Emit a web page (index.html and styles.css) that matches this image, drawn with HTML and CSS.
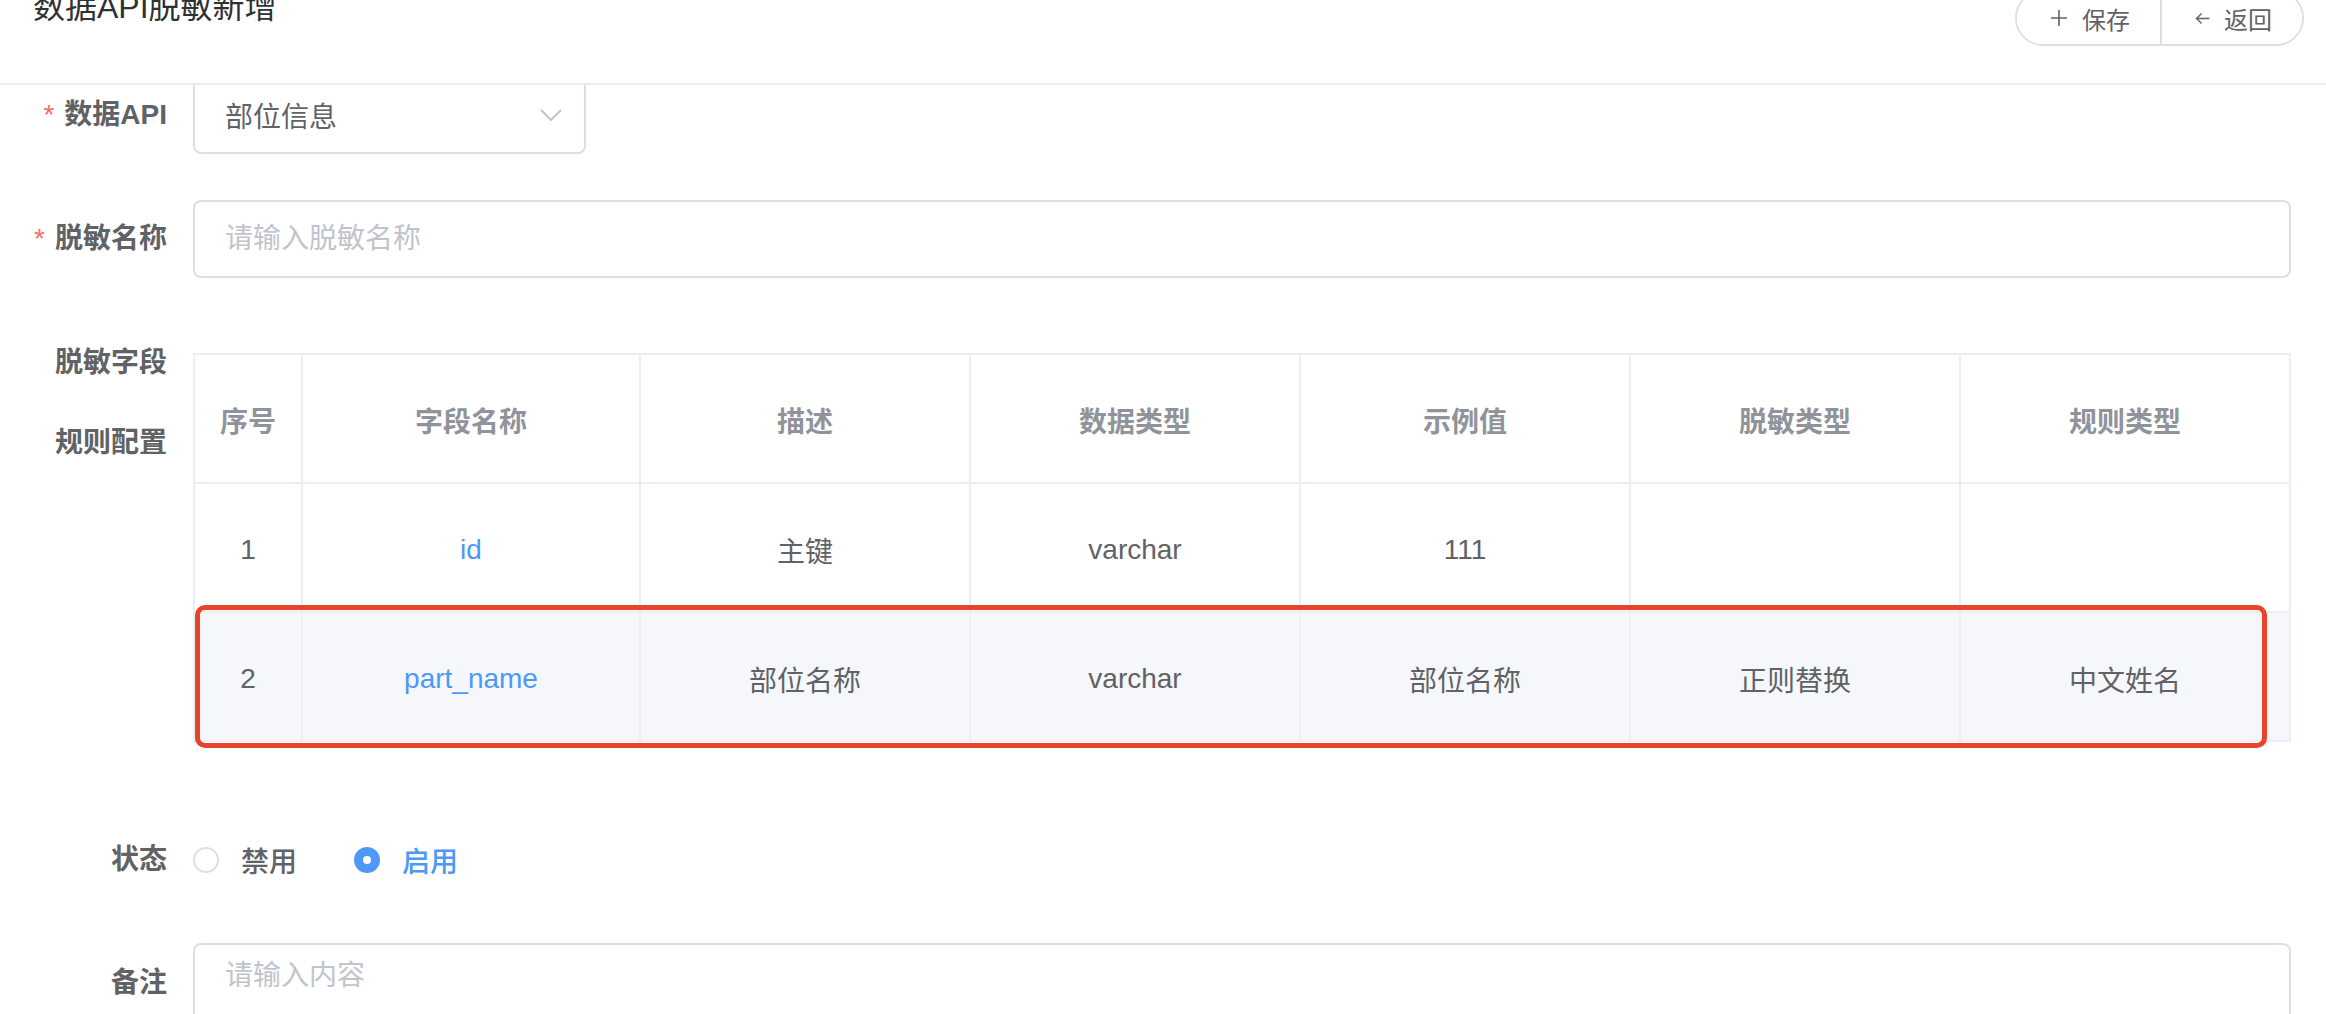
FILE: index.html
```html
<!DOCTYPE html>
<html lang="zh-CN">
<head>
<meta charset="utf-8">
<title>数据API脱敏新增</title>
<link rel="stylesheet" href="styles.css">
</head>
<body>
<header class="page-header">
  <h1 class="page-title">数据API脱敏新增</h1>
  <div class="btn-group">
    <button class="btn btn-save"><svg class="btn-icon" viewBox="0 0 18 18"><path d="M9 1v16M1 9h16"/></svg><span>保存</span></button>
    <button class="btn btn-back"><svg class="btn-icon arrow" viewBox="0 0 16 14"><path d="M15.5 7H1.5M7 1.5L1.5 7 7 12.5"/></svg><span>返回</span></button>
  </div>
</header>
<main class="form">
  <div class="form-item item-api">
    <label class="form-label"><span class="req">*</span>数据API</label>
    <div class="select">
      <span class="select-value">部位信息</span>
      <svg class="chevron" viewBox="0 0 22 12"><path d="M1 1l10 10L21 1"/></svg>
    </div>
  </div>
  <div class="form-item item-name">
    <label class="form-label"><span class="req">*</span>脱敏名称</label>
    <input class="input" type="text" placeholder="请输入脱敏名称">
  </div>
  <div class="form-item item-table">
    <label class="form-label multi">脱敏字段<br>规则配置</label>
    <div class="table">
      <div class="cell th">序号</div>
      <div class="cell th">字段名称</div>
      <div class="cell th">描述</div>
      <div class="cell th">数据类型</div>
      <div class="cell th">示例值</div>
      <div class="cell th">脱敏类型</div>
      <div class="cell th">规则类型</div>

      <div class="cell">1</div>
      <div class="cell link">id</div>
      <div class="cell">主键</div>
      <div class="cell">varchar</div>
      <div class="cell">111</div>
      <div class="cell"></div>
      <div class="cell"></div>

      <div class="cell hl">2</div>
      <div class="cell hl link">part_name</div>
      <div class="cell hl">部位名称</div>
      <div class="cell hl">varchar</div>
      <div class="cell hl">部位名称</div>
      <div class="cell hl">正则替换</div>
      <div class="cell hl">中文姓名</div>

      <div class="highlight-box"></div>
    </div>
  </div>
  <div class="form-item item-status">
    <label class="form-label">状态</label>
    <div class="radio-group">
      <span class="radio"><span class="radio-dot"></span><span class="radio-text">禁用</span></span>
      <span class="radio checked"><span class="radio-dot"></span><span class="radio-text">启用</span></span>
    </div>
  </div>
  <div class="form-item item-remark">
    <label class="form-label tall">备注</label>
    <textarea class="textarea" placeholder="请输入内容"></textarea>
  </div>
</main>
</body>
</html>
```
FILE: styles.css
```css
* { box-sizing: border-box; }
html, body { margin: 0; padding: 0; background: #fff; }
body {
  font-family: "Liberation Sans", "Noto Sans CJK SC", sans-serif;
  color: #606266;
  overflow: hidden;
}

/* header */
.page-header {
  position: relative;
  z-index: 2;
  background: #fff;
  height: 85px;
  border-bottom: 2px solid #ebebf0;
  display: flex;
  justify-content: space-between;
  align-items: flex-start;
  padding: 0 22px 0 33px;
}
.page-title {
  margin: -9px 0 0;
  font-size: 32px;
  line-height: 32px;
  font-weight: 400;
  color: #303133;
}
.btn-group {
  margin-top: -10px;
  display: flex;
  height: 56px;
  border: 2px solid #dcdfe6;
  border-radius: 28px;
  overflow: hidden;
  background: #fff;
}
.btn {
  display: flex;
  align-items: center;
  gap: 14px;
  border: 0;
  background: #fff;
  font-family: "Liberation Sans", "Noto Sans CJK SC", sans-serif;
  font-size: 24px;
  color: #606266;
  padding: 0;
}
.btn-save { padding: 0 30px 0 33px; }
.btn-back { padding: 0 30px 0 33px; border-left: 2px solid #dcdfe6; }
.btn-icon {
  width: 18px;
  height: 18px;
  fill: none;
  stroke: #606266;
  stroke-width: 1.6;
}
.btn-icon.arrow { width: 15px; height: 13px; stroke-width: 1.5; }

/* form */
.form {
  position: relative;
  z-index: 1;
  margin-top: -9px;
  padding-right: 35px;
}
.form-item {
  display: flex;
  align-items: flex-start;
}
.form-label {
  flex: 0 0 193px;
  padding-right: 26px;
  text-align: right;
  font-size: 28px;
  font-weight: 700;
  line-height: 78px;
  color: #606266;
}
.form-label.multi { line-height: 80px; margin-top: -30px; }
.form-label.tall { line-height: 80px; }
.req {
  color: #f56c6c;
  font-weight: 400;
  margin-right: 10px;
}

.item-api { margin-bottom: 46px; }
.item-name { margin-bottom: 75px; }
.item-table { margin-bottom: 79px; }
.item-status { margin-bottom: 44px; }

.select {
  width: 393px;
  height: 78px;
  border: 2px solid #dcdfe6;
  border-radius: 8px;
  display: flex;
  align-items: center;
  justify-content: space-between;
  padding: 0 22px 0 30px;
  font-size: 28px;
  color: #606266;
  background: #fff;
}
.chevron {
  width: 22px;
  height: 12px;
  fill: none;
  stroke: #c0c4cc;
  stroke-width: 2;
}

.input {
  flex: 1;
  height: 78px;
  border: 2px solid #dcdfe6;
  border-radius: 8px;
  padding: 0 30px;
  font-family: "Liberation Sans", "Noto Sans CJK SC", sans-serif;
  font-size: 28px;
  color: #606266;
  outline: none;
  background: #fff;
}
.input::placeholder, .textarea::placeholder { color: #c0c4cc; }

/* table */
.table {
  flex: 1;
  position: relative;
  border-top: 2px solid #ebeef5;
  border-left: 2px solid #ebeef5;
  display: grid;
  grid-template-columns: 108px 338px repeat(5, 1fr);
  grid-auto-rows: 129px;
}
.cell {
  border-right: 2px solid #ebeef5;
  border-bottom: 2px solid #ebeef5;
  display: flex;
  align-items: center;
  justify-content: center;
  padding-top: 4px;
  font-size: 28px;
  color: #606266;
}
.cell.th { color: #909399; font-weight: 700; padding-top: 2px; }
.cell.hl { background: #f5f7fa; }
.cell.link { color: #4e98f8; }
.highlight-box {
  position: absolute;
  left: 0;
  top: 250px;
  width: 2072px;
  height: 143px;
  border: 5px solid #e8442a;
  border-radius: 10px;
  pointer-events: none;
}

/* radio */
.radio-group {
  display: flex;
  align-items: center;
  height: 78px;
  font-size: 28px;
}
.radio {
  display: flex;
  align-items: center;
  margin-right: 57px;
}
.radio-dot {
  width: 26px;
  height: 26px;
  border-radius: 50%;
  border: 2px solid #dcdfe6;
  background: #fff;
  margin-right: 22px;
  display: flex;
  align-items: center;
  justify-content: center;
}
.radio-text { font-weight: 500; color: #606266; }
.radio.checked .radio-dot { background: #4e98f8; border-color: #4e98f8; }
.radio.checked .radio-dot::after {
  content: "";
  width: 8px;
  height: 8px;
  border-radius: 50%;
  background: #fff;
}
.radio.checked .radio-text { color: #4e98f8; }

.textarea {
  flex: 1;
  height: 160px;
  border: 2px solid #dcdfe6;
  border-radius: 8px;
  padding: 10px 30px;
  font-family: "Liberation Sans", "Noto Sans CJK SC", sans-serif;
  font-size: 28px;
  line-height: 42px;
  color: #606266;
  resize: none;
  outline: none;
}
```
